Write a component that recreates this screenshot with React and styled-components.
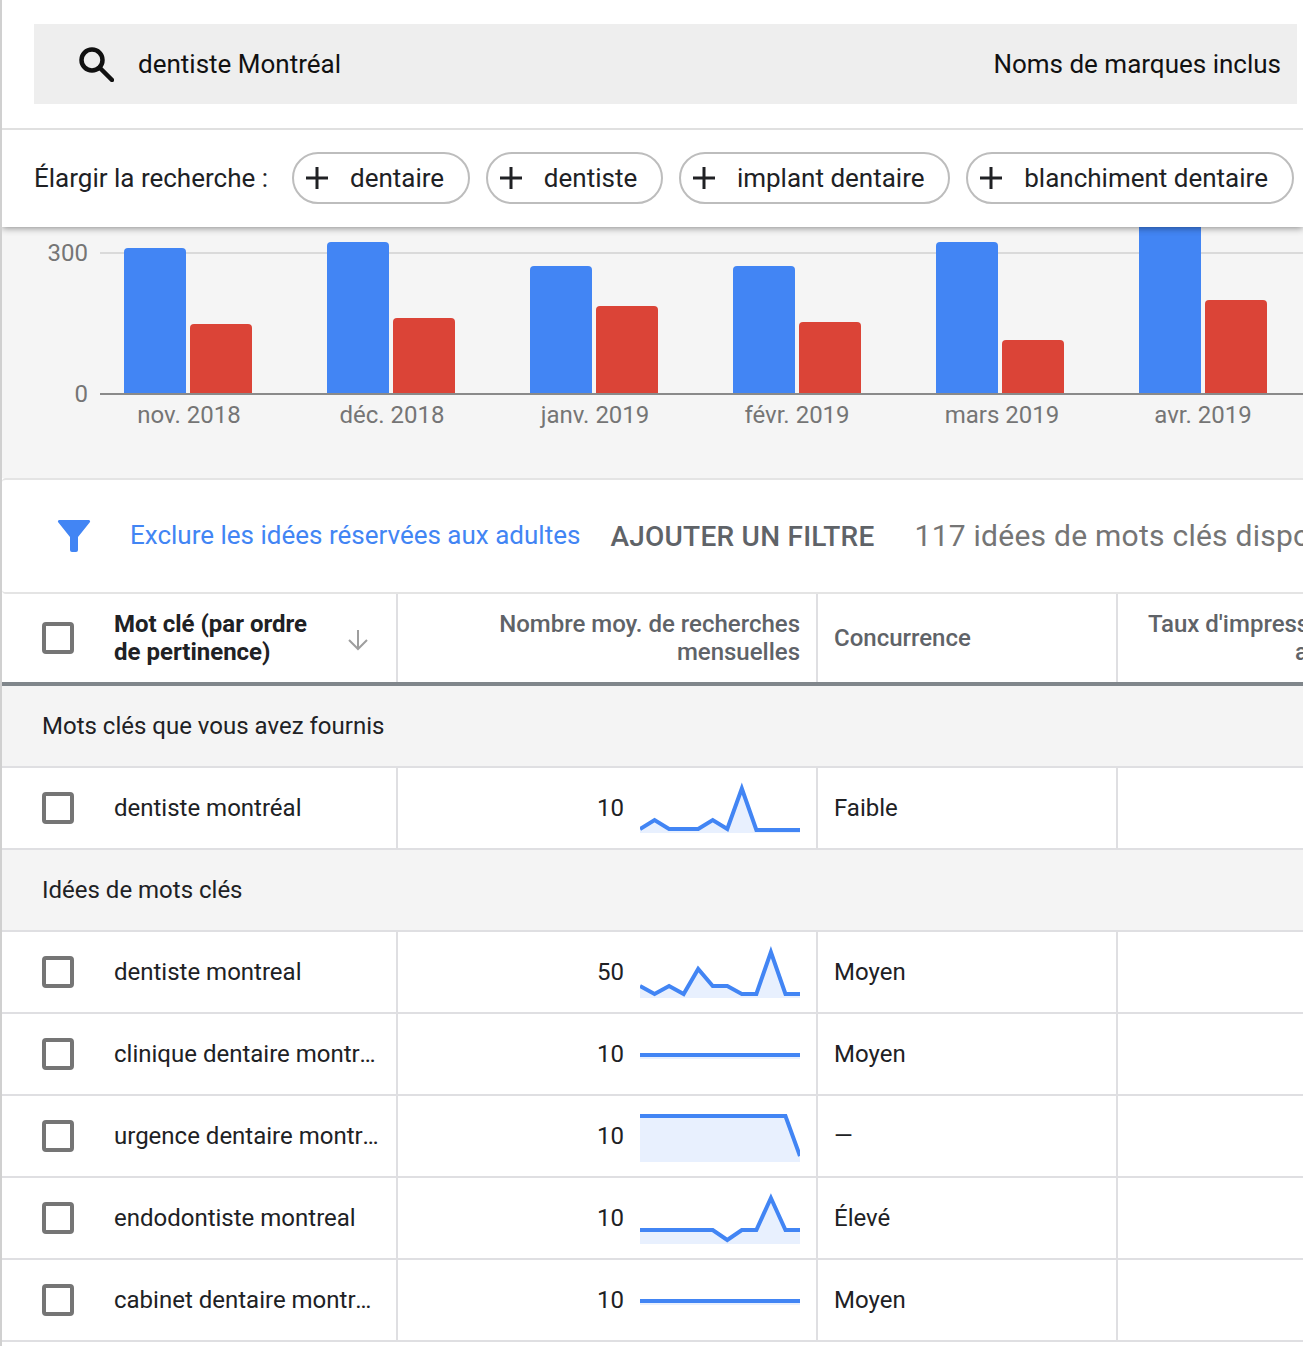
import React from 'react';
import styled, { createGlobalStyle } from 'styled-components';

const months = [
  { label: 'nov. 2018', x: 124, blue: 248, red: 324, center: 189 },
  { label: 'déc. 2018', x: 327, blue: 242, red: 318, center: 392 },
  { label: 'janv. 2019', x: 530, blue: 266, red: 306, center: 595 },
  { label: 'févr. 2019', x: 733, blue: 266, red: 322, center: 797 },
  { label: 'mars 2019', x: 936, blue: 242, red: 340, center: 1002 },
  { label: 'avr. 2019', x: 1139, blue: 216, red: 300, center: 1203 },
];

const chips = ['dentaire', 'dentiste', 'implant dentaire', 'blanchiment dentaire'];

const rows = [
  { group: 'Mots clés que vous avez fournis' },
  { name: 'dentiste montréal', avg: 10, comp: 'Faible', line: [61, 52, 61, 61, 61, 52, 61, 20.5, 62, 62, 62, 62], base: 65 },
  { group: 'Idées de mots clés' },
  { name: 'dentiste montreal', avg: 50, comp: 'Moyen', line: [54, 62, 54, 62, 37, 54, 54, 62, 62, 20, 62, 62], base: 66 },
  { name: 'clinique dentaire montréal', avg: 10, comp: 'Moyen', line: [41, 41, 41, 41, 41, 41, 41, 41, 41, 41, 41, 41], base: 45 },
  { name: 'urgence dentaire montréal', avg: 10, comp: '—', line: [20, 20, 20, 20, 20, 20, 20, 20, 20, 20, 20, 60], base: 66 },
  { name: 'endodontiste montreal', avg: 10, comp: 'Élevé', line: [52, 52, 52, 52, 52, 52, 62, 52, 52, 20, 52, 52], base: 66 },
  { name: 'cabinet dentaire montréal', avg: 10, comp: 'Moyen', line: [41, 41, 41, 41, 41, 41, 41, 41, 41, 41, 41, 41], base: 45 },
];

const GlobalStyle = createGlobalStyle`
  html, body {
    margin: 0;
    padding: 0;
    background: #fff;
  }
  body {
    font-family: Roboto, "Liberation Sans", sans-serif;
    color: #202124;
  }
  svg {
    flex: none;
  }
`;

const Page = styled.div`
  width: 1303px;
  height: 1346px;
  overflow: hidden;
  box-sizing: border-box;
  border-left: 2px solid #d0d0d0;
`;

const Header = styled.header`
  position: relative;
  z-index: 2;
  height: 227px;
  background: #fff;
  box-shadow: 0 1px 7px rgba(0, 0, 0, 0.45);
`;

const SearchZone = styled.div`
  height: 130px;
  padding: 24px 6px 0 32px;
  box-sizing: border-box;
  border-bottom: 2px solid #e0e0e0;
`;

const SearchBar = styled.div`
  height: 80px;
  background: #eeeeee;
  display: flex;
  align-items: center;
  padding: 0 16px 0 44px;
  box-sizing: border-box;
  font-size: 26px;
  color: #111;
`;

const SearchText = styled.span`
  margin-left: 24px;
  flex: 1;
`;

const ChipRow = styled.div`
  height: 97px;
  display: flex;
  align-items: center;
  padding-left: 32px;
  padding-bottom: 2px;
  box-sizing: border-box;
  font-size: 26px;
  color: #202124;
`;

const ChipLabel = styled.span`
  flex: none;
  width: 258px;
  white-space: nowrap;
`;

const Chip = styled.div`
  flex: none;
  height: 52px;
  box-sizing: border-box;
  border: 2px solid #bdbdbd;
  border-radius: 26px;
  display: flex;
  align-items: center;
  padding: 0 23.7px 0 12px;
  gap: 22px;
  margin-right: 16px;
  white-space: nowrap;
`;

const ChartPanel = styled.section`
  height: 251px;
  background: #f5f5f5;
  overflow: hidden;
`;

const ChartSvg = styled.svg`
  display: block;
  width: 1301px;
  height: 251px;
  font-family: Roboto, "Liberation Sans", sans-serif;
  font-size: 24px;
  fill: #757575;
`;

const FilterBar = styled.div`
  height: 116px;
  box-sizing: border-box;
  background: #fff;
  border-top: 2px solid #e4e4e4;
  border-bottom: 2px solid #e4e4e4;
  border-radius: 4px 0 0 4px;
  display: flex;
  align-items: center;
  padding-left: 55px;
  white-space: nowrap;
`;

const FilterLink = styled.span`
  margin-left: 39px;
  margin-bottom: 2px;
  font-size: 26px;
  color: #4285f4;
`;

const AddFilter = styled.span`
  margin-left: 30px;
  font-size: 28px;
  font-weight: 500;
  letter-spacing: 0.25px;
  color: #5f6368;
`;

const IdeaCount = styled.span`
  margin-left: 40px;
  margin-bottom: 2px;
  font-size: 30px;
  letter-spacing: 0.25px;
  color: #757575;
`;

const Table = styled.div`
  width: 1500px;
`;

const Grid = styled.div`
  display: grid;
  grid-template-columns: 396px 420px 300px 287px;
`;

const HeadRow = styled(Grid)`
  height: 92px;
  box-sizing: border-box;
  border-bottom: 4px solid #80868b;
`;

const BodyRow = styled(Grid)`
  height: 82px;
  box-sizing: border-box;
  border-bottom: 2px solid #dfdfe2;
`;

const GroupRow = styled.div`
  height: 82px;
  box-sizing: border-box;
  border-bottom: 2px solid #dfdfe2;
  background: #f4f4f4;
  display: flex;
  align-items: center;
  padding-left: 40px;
  font-size: 24px;
`;

const Cell = styled.div`
  box-sizing: border-box;
  border-right: 2px solid #dfdfe2;
  display: flex;
  align-items: center;
  font-size: 24px;
  color: #202124;
`;

const KeywordCell = styled(Cell)`
  padding-left: 40px;
`;

const VolumeCell = styled(Cell)`
  justify-content: flex-end;
  padding-right: 16px;
  gap: 16px;
`;

const CompCell = styled(Cell)`
  padding-left: 16px;
`;

const HeadCell = styled(Cell)`
  font-weight: 500;
  line-height: 28px;
  color: #5f6368;
  padding: 0 16px;
  white-space: nowrap;
  justify-content: ${(p) => (p.$right ? 'flex-end' : 'flex-start')};
  text-align: ${(p) => (p.$right ? 'right' : 'left')};
`;

const KeywordHead = styled(HeadCell)`
  padding: 0 0 0 40px;
  color: #202124;
  font-weight: 700;
`;

const SortIcon = styled.svg`
  margin-left: 40px;
  margin-top: 4px;
`;

const Box = styled.span`
  width: 32px;
  height: 32px;
  flex: none;
  box-sizing: border-box;
  border: 4px solid #757575;
  border-radius: 4px;
  margin-right: 40px;
  background: #fff;
`;

const KeywordName = styled.span`
  width: 266px;
  white-space: nowrap;
  overflow: hidden;
  text-overflow: ellipsis;
`;

function SearchIcon() {
  return (
    <svg width="36" height="36" viewBox="0 0 36 36" fill="none" stroke="#111" strokeWidth="4.5">
      <circle cx="14" cy="14" r="10.5" />
      <path d="M21.5 21.5 L34 34" strokeLinecap="round" />
    </svg>
  );
}

function PlusIcon() {
  return (
    <svg width="22" height="22" viewBox="0 0 22 22" stroke="#202124" strokeWidth="3">
      <path d="M11 0 V22 M0 11 H22" />
    </svg>
  );
}

function FunnelIcon() {
  return (
    <svg width="34" height="32" viewBox="0 0 34 32" fill="#4285f4">
      <path d="M1 2 a1.5 1.5 0 0 1 1.5 -2 H31.5 a1.5 1.5 0 0 1 1.5 2 L21 17 V30 a2 2 0 0 1 -2 2 H15 a2 2 0 0 1 -2 -2 V17 Z" />
    </svg>
  );
}

// bars only round on top, the bottom sits on the axis
function barPath(x, top, bottom) {
  const r = 4;
  return `M${x} ${bottom} V${top + r} Q${x} ${top} ${x + r} ${top} H${x + 58} Q${x + 62} ${top} ${x + 62} ${top + r} V${bottom} Z`;
}

function Chart() {
  const off = 227;
  return (
    <ChartSvg viewBox="0 0 1301 251">
      <rect x="98" y={252 - off} width="1203" height="2" fill="#dadada" />
      <text x="86" y={261 - off} textAnchor="end">300</text>
      <text x="86" y={402 - off} textAnchor="end">0</text>
      {months.map((m) => (
        <g key={m.label}>
          <path d={barPath(m.x - 2, m.blue - off, 394 - off)} fill="#4285f4" />
          <path d={barPath(m.x + 64, m.red - off, 394 - off)} fill="#db4437" />
          <text x={m.center - 2} y={423 - off} textAnchor="middle">{m.label}</text>
        </g>
      ))}
      <rect x="98" y={393 - off} width="1203" height="2" fill="#8a8a8a" />
    </ChartSvg>
  );
}

function Sparkline({ line, base }) {
  const pts = line.map((y, i) => `${(i * 160) / 11},${y}`);
  return (
    <svg width="160" height="80" viewBox="0 0 160 80">
      <polygon points={`0,${base} ${pts.join(' ')} 160,${base}`} fill="#e8f0fe" />
      <polyline points={pts.join(' ')} fill="none" stroke="#4285f4" strokeWidth="4" />
    </svg>
  );
}

export default function App() {
  return (
    <Page>
      <GlobalStyle />
      <Header>
        <SearchZone>
          <SearchBar>
            <SearchIcon />
            <SearchText>dentiste Montréal</SearchText>
            <span>Noms de marques inclus</span>
          </SearchBar>
        </SearchZone>
        <ChipRow>
          <ChipLabel>Élargir la recherche :</ChipLabel>
          {chips.map((c) => (
            <Chip key={c}>
              <PlusIcon />
              {c}
            </Chip>
          ))}
        </ChipRow>
      </Header>

      <ChartPanel>
        <Chart />
      </ChartPanel>

      <FilterBar>
        <FunnelIcon />
        <FilterLink>Exclure les idées réservées aux adultes</FilterLink>
        <AddFilter>AJOUTER UN FILTRE</AddFilter>
        <IdeaCount>117 idées de mots clés disponibles</IdeaCount>
      </FilterBar>

      <Table>
        <HeadRow>
          <KeywordHead>
            <Box />
            <span>Mot clé (par ordre<br />de pertinence)</span>
            <SortIcon width="22" height="22" viewBox="0 0 22 22" fill="none" stroke="#9e9e9e" strokeWidth="2">
              <path d="M11 1 V20 M2 11 L11 20 L20 11" />
            </SortIcon>
          </KeywordHead>
          <HeadCell $right>
            <span>Nombre moy. de recherches<br />mensuelles</span>
          </HeadCell>
          <HeadCell>Concurrence</HeadCell>
          <HeadCell $right>
            <span>Taux d'impressions de<br />annonce</span>
          </HeadCell>
        </HeadRow>
        {rows.map((r) =>
          r.group ? (
            <GroupRow key={r.group}>{r.group}</GroupRow>
          ) : (
            <BodyRow key={r.name}>
              <KeywordCell>
                <Box />
                <KeywordName>{r.name}</KeywordName>
              </KeywordCell>
              <VolumeCell>
                {r.avg}
                <Sparkline line={r.line} base={r.base} />
              </VolumeCell>
              <CompCell>{r.comp}</CompCell>
              <Cell />
            </BodyRow>
          )
        )}
      </Table>
    </Page>
  );
}
